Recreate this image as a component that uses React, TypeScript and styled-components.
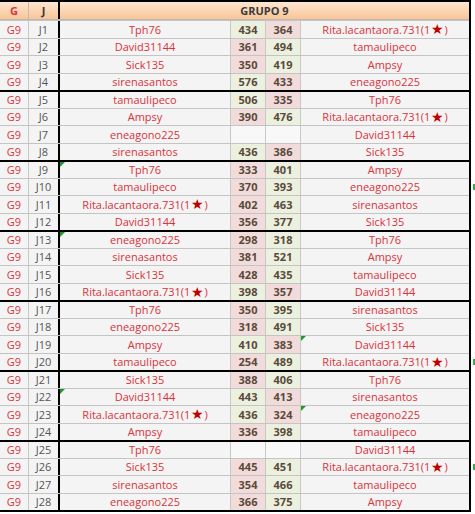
import React from "react";
import styled, { createGlobalStyle } from "styled-components";

const GlobalStyle = createGlobalStyle`
  html, body {
    margin: 0;
    padding: 0;
    background: #ffffff;
  }
  body {
    font-family: "Open Sans", "Liberation Sans", sans-serif;
    font-size: 11px;
  }
`;

const COLS = "29px 31px 171px 35px 35px 168px";

const Sheet = styled.div`
  width: 471px;
  border-top: 2px solid #000;
  border-right: 2px solid #000;
  border-bottom: 2px solid #000;
  box-sizing: border-box;
  position: relative;
`;

const HeaderRow = styled.div`
  display: grid;
  grid-template-columns: 29px 31px 1fr;
  height: 18px;
  background: linear-gradient(#fde6d2, #fac596);
  border-bottom: 1px solid #b9b9b9;
  box-sizing: border-box;
`;

const HeadCell = styled.div<{ $red?: boolean; $last?: boolean; $thick?: boolean }>`
  display: flex;
  align-items: center;
  justify-content: center;
  font-weight: 700;
  font-size: 11px;
  color: ${(p) => (p.$red ? "#d9323a" : "#3a3a3a")};
  border-right: ${(p) =>
    p.$thick ? "2px solid #000" : p.$last ? "none" : "1px solid #c9b8a8"};
`;

const Row = styled.div<{ $thick?: boolean }>`
  display: grid;
  grid-template-columns: ${COLS};
  height: 17.5px;
  box-sizing: border-box;
  border-top: ${(p) => (p.$thick ? "2px solid #000" : "1px solid #c4c4c4")};
  position: relative;
`;

const Cell = styled.div<{ $red?: boolean; $thick?: boolean }>`
  display: flex;
  align-items: center;
  justify-content: center;
  background: #f4f4f4;
  color: ${(p) => (p.$red ? "#d9323a" : "#555555")};
  border-right: ${(p) => (p.$thick ? "2px solid #000" : "1px solid #c8c8c8")};
  white-space: nowrap;
  overflow: visible;
  position: relative;
`;

const NameCell = styled(Cell)`
  color: #d9323a;
`;

const ScoreCell = styled(Cell)<{ $tone: "win" | "lose" | "none" }>`
  background: ${(p) =>
    p.$tone === "win" ? "#ebf1de" : p.$tone === "lose" ? "#f2dcdb" : "#f8f8f8"};
  color: #5a4a3c;
  font-weight: 700;
`;

const LastCell = styled(NameCell)`
  border-right: none;
`;

const Star = styled.span`
  color: #c00000;
  font-size: 14px;
  line-height: 1;
  margin: 0 0.5px;
`;

const Flag = styled.span`
  position: absolute;
  top: 0;
  left: 0;
  width: 0;
  height: 0;
  border-top: 5px solid #1e9a2c;
  border-right: 5px solid transparent;
`;

const OutMark = styled.span`
  position: absolute;
  right: -6px;
  top: 5px;
  width: 2px;
  height: 6px;
  background: #3aa84a;
`;

type Match = [string, number | null, number | null, string];

const matches: Match[] = [
  ["Tph76", 434, 364, "Rita.lacantaora.731(1★)"],
  ["David31144", 361, 494, "tamaulipeco"],
  ["Sick135", 350, 419, "Ampsy"],
  ["sirenasantos", 576, 433, "eneagono225"],
  ["tamaulipeco", 506, 335, "Tph76"],
  ["Ampsy", 390, 476, "Rita.lacantaora.731(1★)"],
  ["eneagono225", null, null, "David31144"],
  ["sirenasantos", 436, 386, "Sick135"],
  ["Tph76", 333, 401, "Ampsy"],
  ["tamaulipeco", 370, 393, "eneagono225"],
  ["Rita.lacantaora.731(1★)", 402, 463, "sirenasantos"],
  ["David31144", 356, 377, "Sick135"],
  ["eneagono225", 298, 318, "Tph76"],
  ["sirenasantos", 381, 521, "Ampsy"],
  ["Sick135", 428, 435, "tamaulipeco"],
  ["Rita.lacantaora.731(1★)", 398, 357, "David31144"],
  ["Tph76", 350, 395, "sirenasantos"],
  ["eneagono225", 318, 491, "Sick135"],
  ["Ampsy", 410, 383, "David31144"],
  ["tamaulipeco", 254, 489, "Rita.lacantaora.731(1★)"],
  ["Sick135", 388, 406, "Tph76"],
  ["David31144", 443, 413, "sirenasantos"],
  ["Rita.lacantaora.731(1★)", 436, 324, "eneagono225"],
  ["Ampsy", 336, 398, "tamaulipeco"],
  ["Tph76", null, null, "David31144"],
  ["Sick135", 445, 451, "Rita.lacantaora.731(1★)"],
  ["sirenasantos", 354, 466, "tamaulipeco"],
  ["eneagono225", 366, 375, "Ampsy"],
];

// cells with the little green corner marker
const flagsLeft = [9, 13, 22];
const flagsRight = [19, 23];
const outMarks = [10, 20, 26];

const Name = ({ text }: { text: string }) => {
  if (!text.includes("★")) return <>{text}</>;
  const [a, b] = text.split("★");
  return (
    <>
      {a}
      <Star>★</Star>
      {b}
    </>
  );
};

const tone = (mine: number | null, other: number | null) => {
  if (mine === null || other === null) return "none" as const;
  return mine > other ? ("win" as const) : ("lose" as const);
};

export default function App() {
  return (
    <>
      <GlobalStyle />
      <Sheet>
        <HeaderRow>
          <HeadCell $red>G</HeadCell>
          <HeadCell $thick>J</HeadCell>
          <HeadCell $last>GRUPO 9</HeadCell>
        </HeaderRow>
        {matches.map(([home, s1, s2, away], i) => {
          const j = i + 1;
          return (
            <Row key={j} $thick={i > 0 && i % 4 === 0}>
              <Cell $red>G9</Cell>
              <Cell $thick>J{j}</Cell>
              <NameCell>
                {flagsLeft.includes(j) && <Flag />}
                <Name text={home} />
              </NameCell>
              <ScoreCell $tone={tone(s1, s2)}>{s1 ?? ""}</ScoreCell>
              <ScoreCell $tone={tone(s2, s1)}>{s2 ?? ""}</ScoreCell>
              <LastCell>
                {flagsRight.includes(j) && <Flag />}
                <Name text={away} />
                {outMarks.includes(j) && <OutMark />}
              </LastCell>
            </Row>
          );
        })}
      </Sheet>
    </>
  );
}
